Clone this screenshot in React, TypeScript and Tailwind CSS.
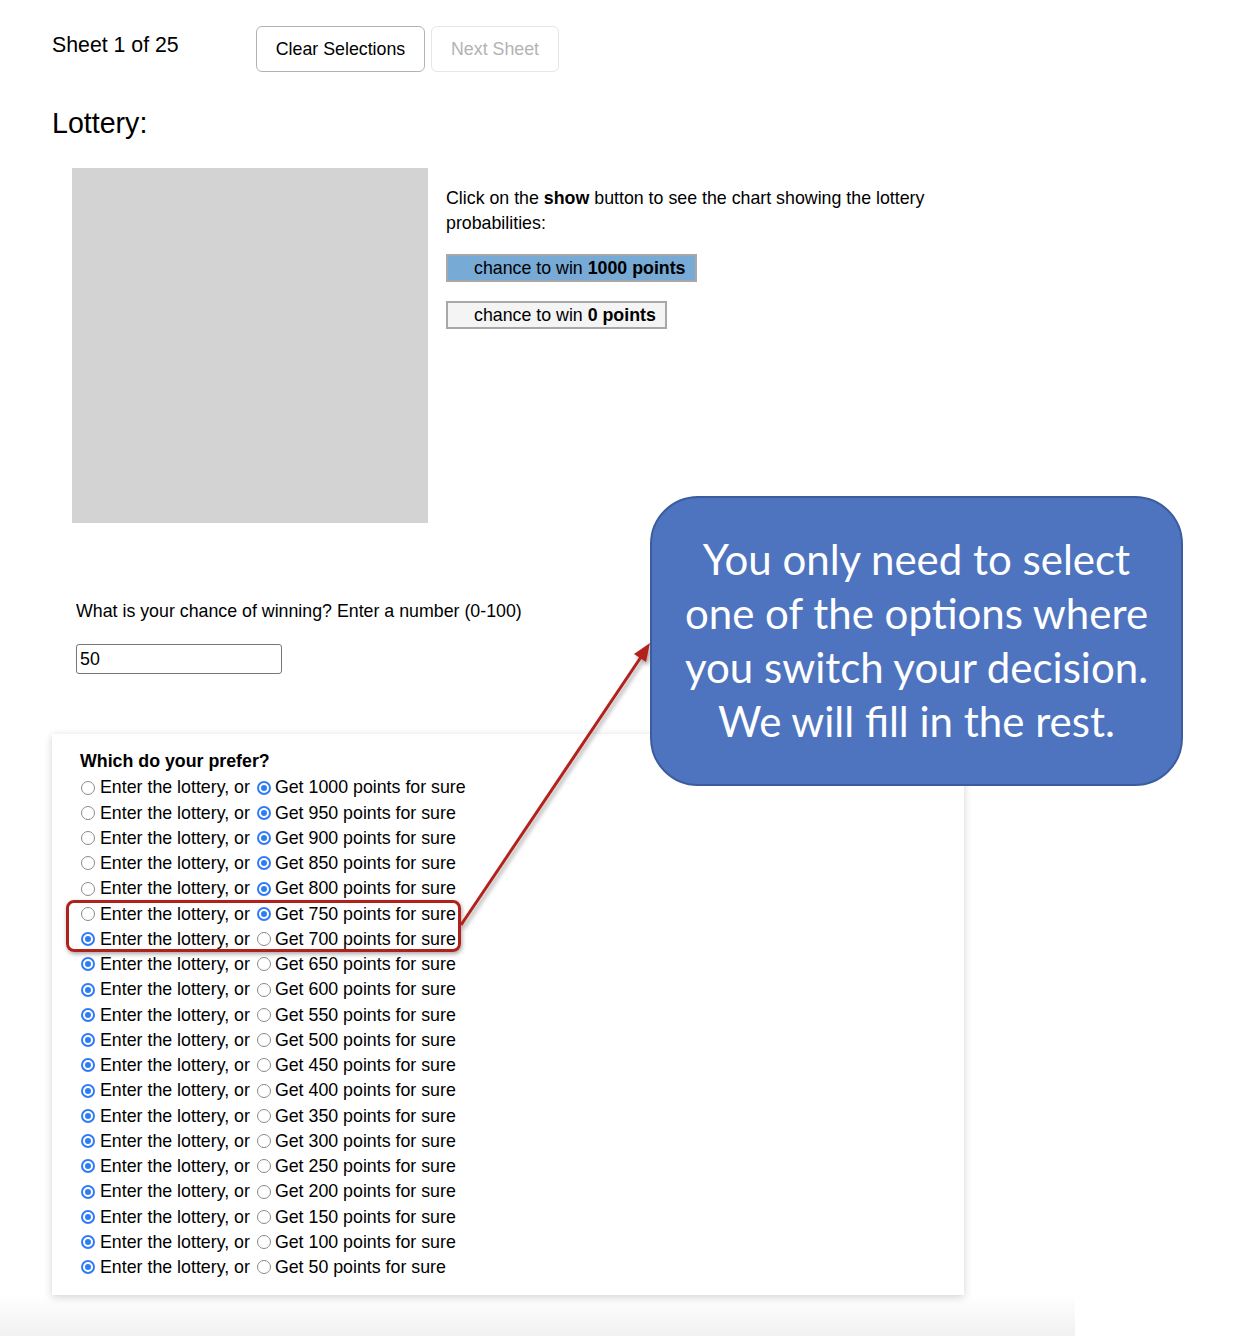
import React from 'react';

const amounts = [1000, 950, 900, 850, 800, 750, 700, 650, 600, 550, 500, 450, 400, 350, 300, 250, 200, 150, 100, 50];

const Radio = ({ checked }: { checked: boolean }) =>
  checked ? (
    <span className="inline-flex w-[14px] h-[14px] rounded-full bg-[#2f7cf6] items-center justify-center shrink-0">
      <span className="w-[10px] h-[10px] rounded-full border-[2px] border-white bg-[#2f7cf6]" />
    </span>
  ) : (
    <span className="inline-block w-[14px] h-[14px] rounded-full border border-[#8a8a8a] bg-white shrink-0" />
  );

const ChoiceRow = ({ amount }: { amount: number }) => {
  const lottery = amount <= 700;
  return (
    <div className="flex items-center h-[25.26px]">
      <Radio checked={lottery} />
      <span className="ml-[5px]">Enter the lottery, or</span>
      <span className="ml-[7px] flex">
        <Radio checked={!lottery} />
      </span>
      <span className="ml-[4px]">Get {amount} points for sure</span>
    </div>
  );
};

export default function App() {
  return (
    <div className="relative w-[1236px] min-h-[1336px] bg-white text-black font-['Liberation_Sans',Arial,sans-serif] overflow-hidden">
      {/* header */}
      <div className="flex items-start pt-[26px] pl-[52px]">
        <div className="w-[204px] text-[21.3px] leading-[24px] pt-[7px]">Sheet 1 of 25</div>
        <div className="flex gap-[6px]">
          <button className="h-[46px] w-[169px] rounded-[6px] border border-[#b3b3b3] bg-white text-[17.8px] text-black">
            Clear Selections
          </button>
          <button className="h-[46px] w-[128px] rounded-[6px] border border-[#e6e6e6] bg-white text-[17.8px] text-[#b3b3b3]">
            Next Sheet
          </button>
        </div>
      </div>

      <h1 className="pl-[52px] mt-[35px] text-[28.6px] leading-[32px]">Lottery:</h1>

      {/* chart + legend */}
      <div className="flex pl-[72px] mt-[29px]">
        <div className="w-[356px] h-[355px] bg-[#d3d3d3] shrink-0" />
        <div className="ml-[18px] mt-[18px] w-[490px] text-[17.8px] leading-[25px]">
          <p>
            Click on the <b>show</b> button to see the chart showing the lottery probabilities:
          </p>
          <div className="mt-[18px] inline-flex h-[28px] items-center border-2 border-[#a8a8a8] bg-[#77aad5] pl-[26px] pr-[9px]">
            chance to win&nbsp;<b>1000 points</b>
          </div>
          <div className="mt-[19px]">
            <div className="inline-flex h-[28px] items-center border-2 border-[#a8a8a8] bg-[#f4f4f4] pl-[26px] pr-[9px]">
              chance to win&nbsp;<b>0 points</b>
            </div>
          </div>
        </div>
      </div>

      {/* estimate */}
      <div className="pl-[76px] mt-[77px] text-[17.8px] leading-[22px]">
        <p>What is your chance of winning? Enter a number (0-100)</p>
        <input
          defaultValue="50"
          className="mt-[22px] w-[206px] h-[30px] rounded-[3px] border border-[#767676] px-[3px] text-[17.8px] outline-none"
        />
      </div>

      {/* choices card */}
      <div className="relative ml-[52px] mt-[60px] w-[912px] bg-white shadow-[0_2px_8px_rgba(0,0,0,0.18)] pl-[28px] pt-[16px] pb-[15px] text-[17.8px]">
        <div className="font-bold h-[22px] leading-[22px]">Which do your prefer?</div>
        <div className="mt-[3px] ml-[1px]">
          {amounts.map((a) => (
            <ChoiceRow key={a} amount={a} />
          ))}
        </div>
        <div className="absolute left-[14px] top-[166px] w-[395px] h-[52px] rounded-[8px] border-[3px] border-[#b1211c] shadow-[1px_2px_4px_rgba(0,0,0,0.35)]" />
      </div>
      <div className="w-[1075px] h-[42px] -mt-[1px] bg-gradient-to-b from-white to-[#f1f1f1]" />

      {/* arrow */}
      <svg className="absolute left-0 top-0 pointer-events-none" width="1236" height="1336">
        <defs>
          <filter id="sh" x="-20%" y="-20%" width="140%" height="140%">
            <feDropShadow dx="2" dy="3" stdDeviation="2" floodColor="#000" floodOpacity="0.35" />
          </filter>
        </defs>
        <g filter="url(#sh)">
          <line x1="461" y1="925" x2="641" y2="657" stroke="#b1211c" strokeWidth="3" />
          <polygon points="650,643 646,662 634,654" fill="#b1211c" />
        </g>
      </svg>

      {/* callout */}
      <div className="absolute left-[650px] top-[496px] w-[533px] h-[290px] rounded-[48px] bg-[#4e74bf] border-2 border-[#3b5d9e] flex items-center justify-center text-center text-white font-['Lato',sans-serif] text-[42px] leading-[54px]">
        <p className="pb-[3px]">
          You only need to select
          <br />
          one of the options where
          <br />
          you switch your decision.
          <br />
          We will fill in the rest.
        </p>
      </div>
    </div>
  );
}
